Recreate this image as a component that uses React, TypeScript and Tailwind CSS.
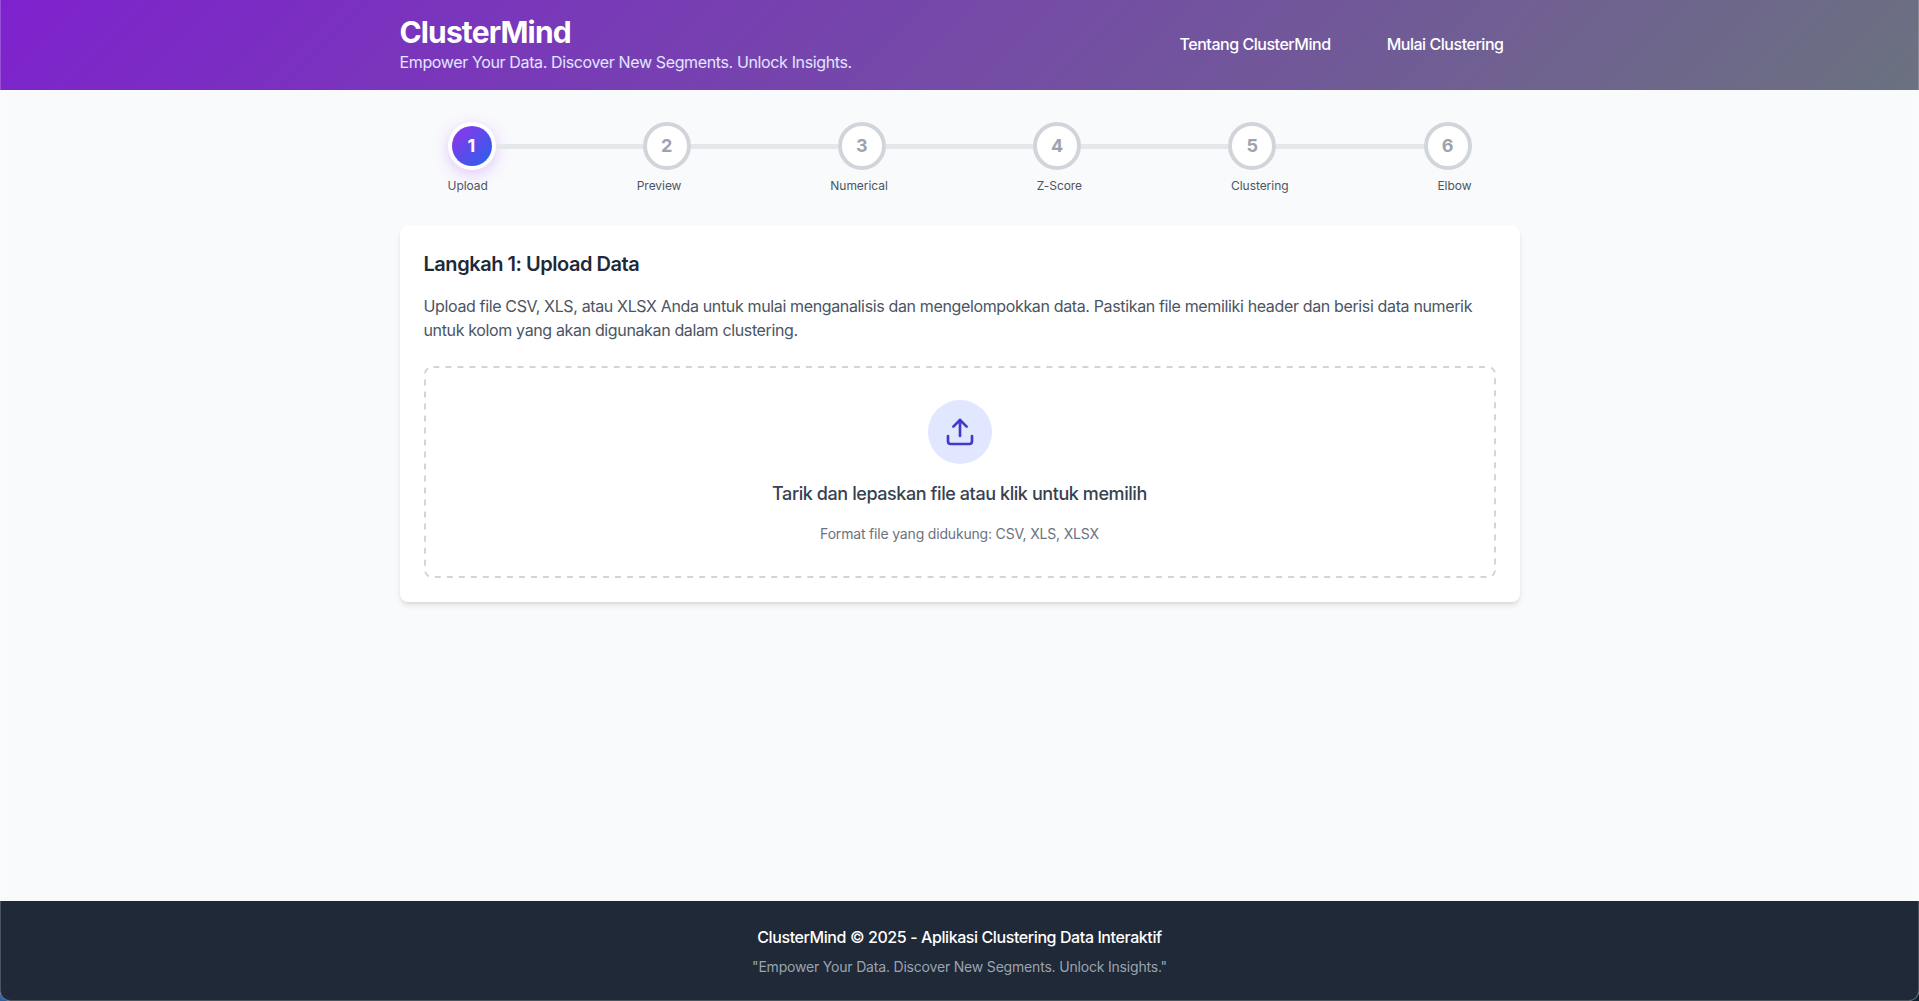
import { Upload } from 'lucide-react';

const steps = ['Upload', 'Preview', 'Numerical', 'Z-Score', 'Clustering', 'Elbow'];

function Header() {
  return (
    <header className="h-[90px] bg-[linear-gradient(135deg,#7e22ce_0%,#6b7280_100%)] pt-3.5">
      <div className="mx-auto flex w-[1120px] items-center justify-between">
        <div>
          <h1 className="text-3xl font-bold tracking-[-0.86px] text-white">ClusterMind</h1>
          <p className="text-base tracking-[-0.367px] text-indigo-100">
            Empower Your Data. Discover New Segments. Unlock Insights.
          </p>
        </div>
        <nav className="flex gap-6 text-base font-medium tracking-[-0.465px] text-white">
          <a className="px-4 py-2">Tentang ClusterMind</a>
          <a className="px-4 py-2">Mulai Clustering</a>
        </nav>
      </div>
    </header>
  );
}

function Stepper() {
  return (
    <div className="mb-8 px-12">
      <div className="flex items-center">
        {steps.map((label, i) => (
          <div key={label} className={i === 0 ? 'flex items-center' : 'flex flex-1 items-center'}>
            {i > 0 && <div className="mt-[5px] mb-1 h-[5px] flex-1 bg-[#e5e7eb]" />}
            <div
              className={
                i === 0
                  ? 'flex size-12 items-center justify-center rounded-full bg-white p-1 shadow-[0_4px_15px_rgba(168,85,247,0.3)]'
                  : 'flex size-12 items-center justify-center rounded-full border-4 border-[#d1d5db] bg-white text-lg font-bold text-[#9ca3af]'
              }
            >
              {i === 0 ? (
                <span className="flex size-10 items-center justify-center rounded-full bg-[linear-gradient(135deg,#9333ea,#2563eb)] text-lg font-bold text-white">
                  1
                </span>
              ) : (
                i + 1
              )}
            </div>
          </div>
        ))}
      </div>
      <div className="mt-2 flex justify-between text-xs tracking-[-0.05px] text-[#4b5563]">
        {steps.map((label) => (
          <span key={label}>{label}</span>
        ))}
      </div>
    </div>
  );
}

function UploadCard() {
  return (
    <section className="rounded-lg bg-white p-6 shadow-md">
      <h2 className="mb-4 text-xl font-semibold tracking-[-0.46px] text-[#1f2937]">Langkah 1: Upload Data</h2>
      <p className="mb-6 text-base tracking-[-0.358px] text-[#4b5563]">
        Upload file CSV, XLS, atau XLSX Anda untuk mulai menganalisis dan mengelompokkan data. Pastikan file memiliki
        header dan berisi data numerik untuk kolom yang akan digunakan dalam clustering.
      </p>
      <div className="relative flex flex-col items-center rounded-lg p-[34px]">
        {/* Dashed outline with even 6px dashes */}
        <svg className="pointer-events-none absolute inset-0 size-full" viewBox="0 0 1072 212" fill="none">
          <rect
            x="1"
            y="1"
            width="1070"
            height="210"
            rx="7"
            stroke="#d1d5db"
            strokeWidth="2"
            strokeDasharray="6 6.019"
            strokeDashoffset="-1.4"
          />
        </svg>
        <div className="mb-4 flex size-16 items-center justify-center rounded-full bg-[#e0e7ff] text-[#4338ca]">
          <Upload className="size-8" strokeWidth={2} />
        </div>
        <h3 className="mb-4 text-lg font-medium tracking-[-0.42px] text-[#374151]">
          Tarik dan lepaskan file atau klik untuk memilih
        </h3>
        <p className="text-sm tracking-[-0.18px] text-[#6b7280]">Format file yang didukung: CSV, XLS, XLSX</p>
      </div>
    </section>
  );
}

function Footer() {
  return (
    <footer className="h-[100px] bg-[#1f2937] py-6 text-center">
      <p className="text-base font-medium tracking-[-0.41px] text-white">
        ClusterMind © 2025 - Aplikasi Clustering Data Interaktif
      </p>
      <p className="mt-2 text-sm tracking-[-0.19px] text-[#9ca3af]">
        "Empower Your Data. Discover New Segments. Unlock Insights."
      </p>
    </footer>
  );
}

export default function App() {
  return (
    <div className="relative h-[1001px] overflow-hidden bg-[linear-gradient(90deg,#2f62a3_0%,#0b2233_100%)] font-[Inter,sans-serif]">
      <div className="flex h-full flex-col overflow-hidden rounded-b-[10px] bg-[#f9fafc]">
        <Header />
        <main className="mx-auto w-[1120px] flex-1 pt-8">
          <Stepper />
          <UploadCard />
        </main>
        <Footer />
      </div>
      <div className="pointer-events-none absolute inset-0 rounded-b-[10px] border border-t-0 border-white/20" />
    </div>
  );
}
